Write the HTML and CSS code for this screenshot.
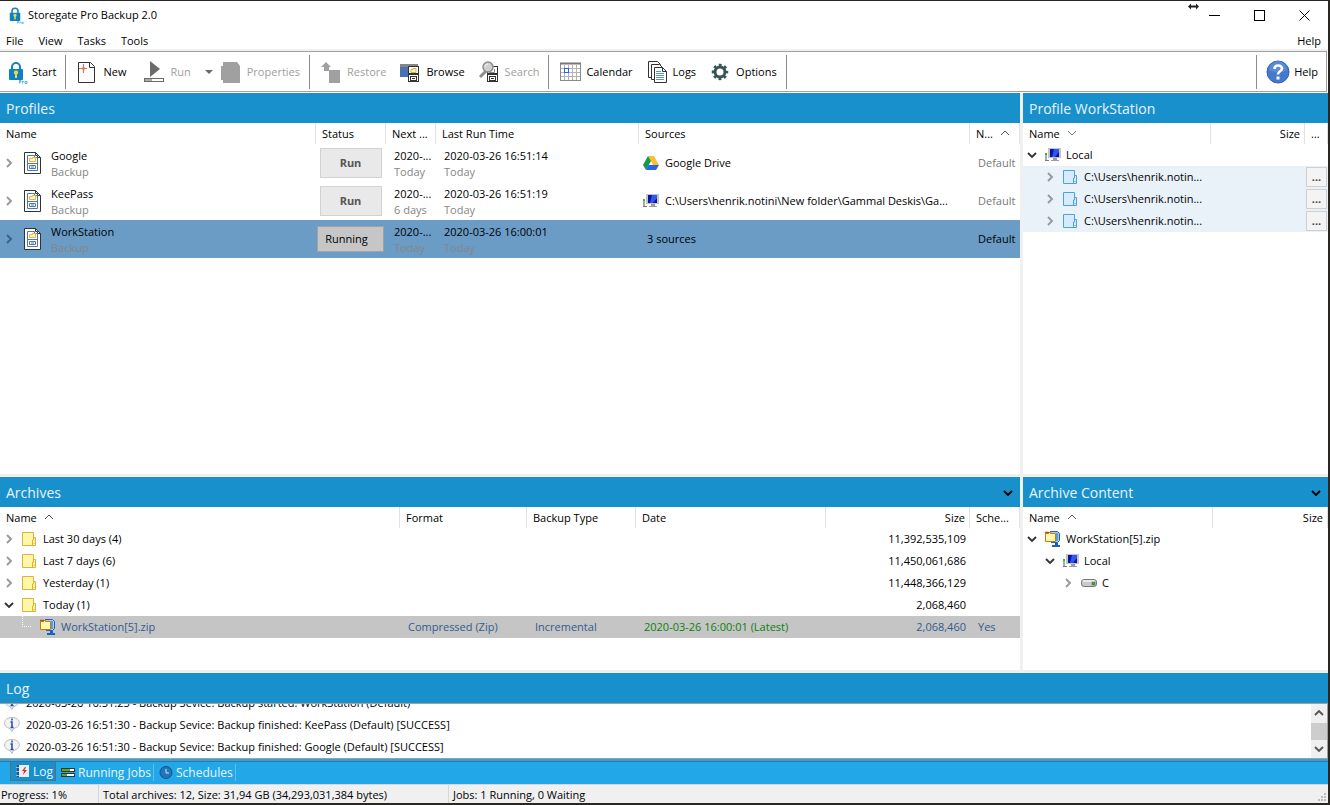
FILE: index.html
```html
<!DOCTYPE html>
<html lang="en">
<head>
  <meta charset="UTF-8" />
  <meta name="viewport" content="width=device-width, initial-scale=1.0" />
  <title>Storegate Pro Backup 2.0</title>
  <link rel="stylesheet" href="styles.css">
</head>
<body>
  <!-- shared icons -->
  <svg class="sprite" aria-hidden="true">
    <symbol id="i-lock" viewBox="0 0 24 24">
      <path d="M8 10V7a4 4 0 0 1 8 0v3" fill="none" stroke="#1583b8" stroke-width="2" />
      <rect x="5" y="9" width="14" height="11" rx="1" fill="#0b82c4" />
      <path d="M12 10.500a2 2 0 0 1 1.500 3.500l-.5.500V18h-2v-3.500l-.5-.5a2 2 0 0 1 1.500-3.500z" fill="#f2d44a" />
      <path d="M15.500 23.500v-3h1.500v1.500h-1.500m3 1.500v-2h1.500m1 0h2v2h-2z" fill="none" stroke="#2d9fe0" stroke-width=".8" />
    </symbol>
    <symbol id="i-new" viewBox="0 0 24 24">
      <path d="M3.500 2.500h12l4 4v16h-16z" fill="#fdfdfd" stroke="#333" />
      <path d="M14.500 2.500v5h5" fill="none" stroke="#333" />
      <path d="M8 4v3l-1 1H4v1h3l1 1v3h1v-3l1-1h2V8h-2L9 7V4z" fill="#f2684a" />
    </symbol>
    <symbol id="i-run" viewBox="0 0 24 24">
      <path d="M8 1l10 8-10 8z" fill="#6b6b6b" />
      <rect x="2.500" y="18.500" width="19" height="3" fill="#fff" stroke="#6b6b6b" />
      <path d="M3 19h7v2H3z" fill="#aaa" />
    </symbol>
    <symbol id="i-props" viewBox="0 0 24 24">
      <path d="M4 2h14l3 4v17H4v-3H2V6h2z" fill="#a0a0a0" />
    </symbol>
    <symbol id="i-restore" viewBox="0 0 24 24">
      <path d="M7 2l5 5h-2v3h11v13H10V11H5V7H2z" fill="#a0a0a0" />
    </symbol>
    <symbol id="i-cabinet" viewBox="0 0 24 24">
      <rect x="10.500" y="6.500" width="10" height="15" fill="#fff" stroke="#333" />
      <path d="M10 14h11" stroke="#333" stroke-width="2" />
      <rect x="12.500" y="16.500" width="6" height="4" fill="none" stroke="#333" />
      <path d="M14 18.500h3" stroke="#333" />
    </symbol>
    <symbol id="i-browse" viewBox="0 0 24 24">
      <rect x="2" y="4" width="18" height="13" fill="#4a72b0" />
      <path d="M2 4h18v3H2z" fill="#858585" />
      <use href="#i-cabinet" />
      <path d="M13 12.500v-3h2v-1h3v4z" fill="#fff3c4" stroke="#d9b23c" />
    </symbol>
    <symbol id="i-search" viewBox="0 0 24 24">
      <use href="#i-cabinet" />
      <path d="M12.500 8v4.500h5V9" fill="none" stroke="#888" />
      <path d="M9 11l-6 6" stroke="#8c8c8c" stroke-width="3" />
      <circle cx="11" cy="7" r="5" fill="#cfcfcf" stroke="#8c8c8c" stroke-width="1.500" />
      <path d="M8 7a3 3 0 0 1 3-3" fill="none" stroke="#f4f4f4" />
    </symbol>
    <symbol id="i-calendar" viewBox="0 0 24 24">
      <rect x="2.500" y="3.500" width="20" height="17" fill="#fff" stroke="#8a8a8a" />
      <path d="M2 3.500h21" stroke="#777" stroke-width="2" />
      <path d="M6.500 5v15m4-15v15m4-15v15m4-15v15M3 8.500h19M3 12.500h19M3 16.500h19" stroke="#b2b2b2" />
      <rect x="6.500" y="8.500" width="4" height="4" fill="#fff" stroke="#2f62d8" />
    </symbol>
    <symbol id="i-logs" viewBox="0 0 24 24">
      <path d="M3.500 1.500h9l3 3v13h-12z" fill="#fff" stroke="#333" />
      <path d="M6.500 4.500h8l3 3v12h-11z" fill="#fff" stroke="#333" />
      <path d="M9.500 7.500h8l4 4v11h-12z" fill="#fff" stroke="#333" />
      <path d="M17.500 7.500v4h4" fill="none" stroke="#333" />
      <path d="M11 11.500h5M11 13.500h8M11 15.500h8M11 17.500h8M11 19.500h8" stroke="#5594cf" />
    </symbol>
    <symbol id="i-gear" viewBox="0 0 24 24">
      <circle cx="12" cy="12" r="5" fill="none" stroke="#375359" stroke-width="3" />
      <circle cx="12" cy="12" r="7" fill="none" stroke="#375359" stroke-width="2.500" stroke-dasharray="2.750 2.750" stroke-dashoffset="1.400" />
    </symbol>
    <symbol id="i-help" viewBox="0 0 24 24">
      <circle cx="12" cy="12" r="11" fill="#4779cb" stroke="#2e5fb1" />
      <path d="M3 10a9 9 0 0 1 18 0c-5 3-12 3-18 0z" fill="#6c96dc" opacity=".6" />
      <path d="M8.500 9c0-5 7.500-4.500 7.500-.5 0 3-4 2.500-4 6" fill="none" stroke="#fff" stroke-width="2.500" />
      <rect x="10.500" y="16.500" width="3" height="3" fill="#fff" />
    </symbol>
    <symbol id="i-profile" viewBox="0 0 18 22">
      <path d="M.5.500h11l5 5v16H.5z" fill="#fff" stroke="#333" />
      <path d="M11.500.500v3h2v2h3" fill="none" stroke="#333" />
      <path d="M3.500 3.500h7v2h3v13h-10zM3 11.500h11" fill="none" stroke="#4a78b5" />
      <path d="M5.500 9.500v-3h3v-1h3v4z" fill="#fff6cf" stroke="#e6b92e" />
      <path d="M5.500 13.500h6v3h-6zM7 15h3" fill="none" stroke="#4a78b5" />
    </symbol>
    <symbol id="i-pc" viewBox="0 0 16 14">
      <rect x="3" y="0" width="13" height="10" fill="#c4c4c4" />
      <rect x="5" y="1" width="9" height="8" fill="#0a14a8" />
      <path d="M9 1h5v3L10 9H7z" fill="#2d58ee" />
      <path d="M8 10h4v2h2v1H6v-1h2z" fill="#9d9d9d" />
      <path d="M0 5h2v8H0z" fill="#aaa" />
      <path d="M0 5h2v2H0z" fill="#17d017" />
      <path d="M0 12h4v1H0z" fill="#777" />
    </symbol>
    <symbol id="i-drive" viewBox="0 0 16 14">
      <path d="M5 0h6l5 9h-6z" fill="#fbc02d" />
      <path d="M5 0l3 5-5 9-3-5z" fill="#129b50" />
      <path d="M5.500 9H16l-3 5H3z" fill="#2a62e8" />
    </symbol>
    <symbol id="i-folder" viewBox="0 0 14 14">
      <path d="M.5.500h11v5h2v8H.5z" fill="#fff7a8" stroke="#ddb23a" />
      <path d="M11.500 5v3h-1v5.500M12 11v1" fill="none" stroke="#ddb23a" />
    </symbol>
    <symbol id="i-bluefolder" viewBox="0 0 14 14">
      <path d="M.5.500h11v5h2v8H.5z" fill="#d9ebfa" stroke="#4ba3dc" />
      <path d="M11.500 5v3h-1v5.500M12 11v1" fill="none" stroke="#4ba3dc" />
    </symbol>
    <symbol id="i-zip" viewBox="0 0 16 16">
      <path d="M5 .5h7.500l2 2v7l-2 2H6" fill="#a8d0f5" stroke="#1c5fc4" />
      <path d="M12 2v8" stroke="#1c5fc4" />
      <path d="M.5 2.500h3v-1h2v1h5v8H.5z" fill="#fff7ae" stroke="#c07c16" />
      <path d="M0 1.500h4" stroke="#c8441c" stroke-width="1.500" />
      <path d="M10 12h3v2h2v2H7v-2h3z" fill="#1c5fc4" />
    </symbol>
    <symbol id="i-disk" viewBox="0 0 16 8">
      <rect x=".5" y=".5" width="15" height="7" rx="2.500" fill="#c9c9ce" stroke="#777" />
      <path d="M2 2h12" stroke="#f4f4f4" stroke-width="1.500" />
      <rect x="11" y="3" width="3" height="3" fill="#27b12c" stroke="#476b47" stroke-width=".5" />
    </symbol>
    <symbol id="i-info" viewBox="0 0 16 16">
      <path d="M8 .5c9 0 10 9 1.500 11l-1.500 3-2-3C-2 9.500-1 .5 8 .5z" fill="#f3f3f3" stroke="#b9b9b9" />
      <path d="M8 1.500v2M6.500 5H8v5M6.500 10.500h3" fill="none" stroke="#2446b0" stroke-width="1.500" />
    </symbol>
    <symbol id="i-right" viewBox="0 0 10 10">
      <path d="M3 1l4 4-4 4" fill="none" stroke="currentColor" stroke-width="1.900" />
    </symbol>
    <symbol id="i-down" viewBox="0 0 10 10">
      <path d="M1 3l4 4 4-4" fill="none" stroke="currentColor" stroke-width="1.900" />
    </symbol>
    <symbol id="i-up" viewBox="0 0 10 10">
      <path d="M1 7l4-4 4 4" fill="none" stroke="currentColor" stroke-width="1.900" />
    </symbol>
    <symbol id="i-sortup" viewBox="0 0 10 10">
      <path d="M1 7l4-4 4 4" fill="none" stroke="#555" />
    </symbol>
    <symbol id="i-sortdown" viewBox="0 0 10 10">
      <path d="M1 3l4 4 4-4" fill="none" stroke="#777" />
    </symbol>
  </svg>

  <header class="titlebar">
    <svg class="app-icon"><use href="#i-lock" /></svg>
    <h1>Storegate Pro Backup 2.0</h1>
    <div class="window-buttons">
      <button aria-label="Minimize"><svg viewBox="0 0 11 11"><path d="M0 5.500h11" stroke="#000" /></svg></button>
      <button aria-label="Maximize"><svg viewBox="0 0 11 11"><rect x=".5" y=".5" width="10" height="10" fill="none" stroke="#000" /></svg></button>
      <button aria-label="Close"><svg viewBox="0 0 11 11"><path d="M.5.500l10 10m0-10l-10 10" stroke="#000" /></svg></button>
      <svg class="resize-cursor" viewBox="0 0 11 7"><path d="M0 3.500L3 .5v2h5v-2l3 3-3 3v-2H3v2z" fill="#222" /></svg>
    </div>
  </header>

  <nav class="menubar">
    <a href="#">File</a>
    <a href="#">View</a>
    <a href="#">Tasks</a>
    <a href="#">Tools</a>
    <a href="#" class="push">Help</a>
  </nav>

  <div class="toolbar">
    <button class="start"><svg><use href="#i-lock" /></svg>Start</button>
    <span class="sep"></span>
    <button><svg><use href="#i-new" /></svg>New</button>
    <button disabled class="run"><svg><use href="#i-run" /></svg>Run</button>
    <button class="drop" aria-label="Run options"><span class="caret"></span></button>
    <button disabled><svg><use href="#i-props" /></svg>Properties</button>
    <span class="sep"></span>
    <button disabled><svg><use href="#i-restore" /></svg>Restore</button>
    <button><svg><use href="#i-browse" /></svg>Browse</button>
    <button disabled><svg><use href="#i-search" /></svg>Search</button>
    <span class="sep"></span>
    <button><svg><use href="#i-calendar" /></svg>Calendar</button>
    <button><svg><use href="#i-logs" /></svg>Logs</button>
    <button><svg><use href="#i-gear" /></svg>Options</button>
    <span class="sep"></span>
    <span class="sep push"></span>
    <button><svg><use href="#i-help" /></svg>Help</button>
  </div>

  <main class="panes">
    <section class="pane">
      <h2>Profiles</h2>
      <table class="profiles">
        <colgroup>
          <col class="w-name"><col class="w-status"><col class="w-next"><col class="w-last"><col><col class="w-short">
        </colgroup>
        <thead>
          <tr>
            <th>Name</th>
            <th>Status</th>
            <th>Next ...</th>
            <th>Last Run Time</th>
            <th>Sources</th>
            <th>N...<svg class="sort"><use href="#i-sortup" /></svg></th>
          </tr>
        </thead>
        <tbody>
          <tr>
            <td><div class="item"><svg class="arrow"><use href="#i-right" /></svg><svg class="profile-icon"><use href="#i-profile" /></svg><p>Google<small>Backup</small></p></div></td>
            <td class="action"><button>Run</button></td>
            <td><p>2020-...<small>Today</small></p></td>
            <td><p>2020-03-26 16:51:14<small>Today</small></p></td>
            <td><div class="source"><svg><use href="#i-drive" /></svg>Google Drive</div></td>
            <td class="muted">Default</td>
          </tr>
          <tr>
            <td><div class="item"><svg class="arrow"><use href="#i-right" /></svg><svg class="profile-icon"><use href="#i-profile" /></svg><p>KeePass<small>Backup</small></p></div></td>
            <td class="action"><button>Run</button></td>
            <td><p>2020-...<small>6 days</small></p></td>
            <td><p>2020-03-26 16:51:19<small>Today</small></p></td>
            <td><div class="source"><svg><use href="#i-pc" /></svg>C:\Users\henrik.notini\New folder\Gammal Deskis\Ga...</div></td>
            <td class="muted">Default</td>
          </tr>
          <tr class="selected">
            <td><div class="item"><svg class="arrow"><use href="#i-right" /></svg><svg class="profile-icon"><use href="#i-profile" /></svg><p>WorkStation<small>Backup</small></p></div></td>
            <td class="action"><button class="running">Running</button></td>
            <td><p>2020-...<small>Today</small></p></td>
            <td><p>2020-03-26 16:00:01<small>Today</small></p></td>
            <td>3 sources</td>
            <td>Default</td>
          </tr>
        </tbody>
      </table>
    </section>

    <section class="pane">
      <h2>Profile WorkStation</h2>
      <table class="tree">
        <colgroup><col><col class="w-size"><col class="w-more"></colgroup>
        <thead>
          <tr>
            <th>Name<svg class="sort"><use href="#i-sortdown" /></svg></th>
            <th class="num">Size</th>
            <th>...</th>
          </tr>
        </thead>
        <tbody>
          <tr>
            <td><div class="node"><svg class="arrow open"><use href="#i-down" /></svg><svg class="icon"><use href="#i-pc" /></svg>Local</div></td>
            <td></td>
            <td></td>
          </tr>
          <tr class="tint">
            <td><div class="node level-2"><svg class="arrow"><use href="#i-right" /></svg><svg class="icon folder"><use href="#i-bluefolder" /></svg>C:\Users\henrik.notin...</div></td>
            <td></td>
            <td class="more"><button>...</button></td>
          </tr>
          <tr class="tint">
            <td><div class="node level-2"><svg class="arrow"><use href="#i-right" /></svg><svg class="icon folder"><use href="#i-bluefolder" /></svg>C:\Users\henrik.notin...</div></td>
            <td></td>
            <td class="more"><button>...</button></td>
          </tr>
          <tr class="tint">
            <td><div class="node level-2"><svg class="arrow"><use href="#i-right" /></svg><svg class="icon folder"><use href="#i-bluefolder" /></svg>C:\Users\henrik.notin...</div></td>
            <td></td>
            <td class="more"><button>...</button></td>
          </tr>
        </tbody>
      </table>
    </section>

    <section class="pane">
      <h2>Archives<button aria-label="Collapse"><svg><use href="#i-down" /></svg></button></h2>
      <table class="tree">
        <colgroup>
          <col><col class="w-format"><col class="w-type"><col class="w-date"><col class="w-bytes"><col class="w-short">
        </colgroup>
        <thead>
          <tr>
            <th>Name<svg class="sort"><use href="#i-sortup" /></svg></th>
            <th>Format</th>
            <th>Backup Type</th>
            <th>Date</th>
            <th class="num">Size</th>
            <th>Sche...</th>
          </tr>
        </thead>
        <tbody>
          <tr>
            <td><div class="node"><svg class="arrow"><use href="#i-right" /></svg><svg class="icon folder"><use href="#i-folder" /></svg>Last 30 days (4)</div></td>
            <td></td><td></td><td></td>
            <td class="num">11,392,535,109</td>
            <td></td>
          </tr>
          <tr>
            <td><div class="node"><svg class="arrow"><use href="#i-right" /></svg><svg class="icon folder"><use href="#i-folder" /></svg>Last 7 days (6)</div></td>
            <td></td><td></td><td></td>
            <td class="num">11,450,061,686</td>
            <td></td>
          </tr>
          <tr>
            <td><div class="node"><svg class="arrow"><use href="#i-right" /></svg><svg class="icon folder"><use href="#i-folder" /></svg>Yesterday (1)</div></td>
            <td></td><td></td><td></td>
            <td class="num">11,448,366,129</td>
            <td></td>
          </tr>
          <tr>
            <td><div class="node"><svg class="arrow open"><use href="#i-down" /></svg><svg class="icon folder"><use href="#i-folder" /></svg>Today (1)</div></td>
            <td></td><td></td><td></td>
            <td class="num">2,068,460</td>
            <td></td>
          </tr>
          <tr class="current">
            <td><div class="node level-2"><svg class="branch" viewBox="0 0 10 22"><path d="M.5 0v10.500H10" fill="none" stroke="#fff" stroke-dasharray="1 1" /></svg><svg class="icon"><use href="#i-zip" /></svg>WorkStation[5].zip</div></td>
            <td>Compressed (Zip)</td>
            <td>Incremental</td>
            <td class="latest">2020-03-26 16:00:01 (Latest)</td>
            <td class="num">2,068,460</td>
            <td>Yes</td>
          </tr>
        </tbody>
      </table>
    </section>

    <section class="pane">
      <h2>Archive Content<button aria-label="Collapse"><svg><use href="#i-down" /></svg></button></h2>
      <table class="tree">
        <colgroup><col><col class="w-content"></colgroup>
        <thead>
          <tr>
            <th>Name<svg class="sort"><use href="#i-sortup" /></svg></th>
            <th class="num">Size</th>
          </tr>
        </thead>
        <tbody>
          <tr>
            <td><div class="node"><svg class="arrow open"><use href="#i-down" /></svg><svg class="icon"><use href="#i-zip" /></svg>WorkStation[5].zip</div></td>
            <td></td>
          </tr>
          <tr>
            <td><div class="node level-2"><svg class="arrow open"><use href="#i-down" /></svg><svg class="icon"><use href="#i-pc" /></svg>Local</div></td>
            <td></td>
          </tr>
          <tr>
            <td><div class="node level-3"><svg class="arrow"><use href="#i-right" /></svg><svg class="icon disk"><use href="#i-disk" /></svg>C</div></td>
            <td></td>
          </tr>
        </tbody>
      </table>
    </section>
  </main>

  <section class="log">
    <h2>Log</h2>
    <div class="log-box">
      <ul>
        <li><svg><use href="#i-info" /></svg>2020-03-26 16:51:25 - Backup Sevice: Backup started: WorkStation (Default)</li>
        <li><svg><use href="#i-info" /></svg>2020-03-26 16:51:30 - Backup Sevice: Backup finished: KeePass (Default) [SUCCESS]</li>
        <li><svg><use href="#i-info" /></svg>2020-03-26 16:51:30 - Backup Sevice: Backup finished: Google (Default) [SUCCESS]</li>
      </ul>
      <div class="scrollbar">
        <svg><use href="#i-up" /></svg>
        <span class="thumb"></span>
        <svg><use href="#i-down" /></svg>
      </div>
    </div>
  </section>

  <div class="tabs">
    <button class="active">
      <svg viewBox="0 0 14 14"><path d="M1 0h12v12H1z" fill="#e9eef5" /><path d="M1 0h2v12H1z" fill="#2c4f8f" /><path d="M0 2.500h3m-3 4h3m-3 4h3" stroke="#9cb8dd" /><path d="M9 2L6 6h2l-1 4 4-5H8.500L10 2z" fill="#d0342c" /></svg>
      Log
    </button>
    <button>
      <svg viewBox="0 0 14 14"><rect x=".5" y="2.500" width="13" height="3" fill="#fff" stroke="#333" /><path d="M1 3h8v2H1z" fill="#5aa813" /><rect x=".5" y="7.500" width="13" height="3" fill="#fff" stroke="#333" /><path d="M1 8h5v2H1z" fill="#5aa813" /></svg>
      Running Jobs
    </button>
    <button>
      <svg viewBox="0 0 14 14"><circle cx="7" cy="6.500" r="6" fill="#1f77b8" stroke="#1d4f80" /><path d="M7 3v4h3" fill="none" stroke="#cfe8f8" /></svg>
      Schedules
    </button>
  </div>

  <footer class="statusbar">
    <span class="progress">Progress: 1%</span>
    <span class="totals">Total archives: 12, Size: 31,94 GB (34,293,031,384 bytes)</span>
    <span>Jobs: 1 Running, 0 Waiting</span>
    <svg class="grip" viewBox="0 0 8 8"><path d="M6 0h2v2H6zM3 3h2v2H3zM6 3h2v2H6zM0 6h2v2H0zM3 6h2v2H3zM6 6h2v2H6z" fill="#bbb" /></svg>
  </footer>
</body>
</html>
```
FILE: styles.css
```css
* {
  margin: 0;
  padding: 0;
  box-sizing: border-box;
}

body {
  display: flex;
  flex-direction: column;
  height: 100vh;
  overflow: hidden;
  font-family: 'Open Sans', 'Noto Sans', sans-serif;
  font-size: 11px;
  line-height: 16px;
  color: #000;
  background: #fff;
  border: 1px solid #2a2622;
  border-width: 1px 2px 2px 0;
}

button {
  font: inherit;
  color: inherit;
  background: none;
  border: none;
}

a {
  color: inherit;
  text-decoration: none;
}

svg {
  display: block;
  flex: none;
}

.sprite {
  position: absolute;
  width: 0;
  height: 0;
}

.push {
  margin-left: auto;
}

/* title bar */
.titlebar {
  display: flex;
  align-items: center;
  height: 30px;
  padding: 0 1px 2px 6px;
}

.app-icon {
  width: 18px;
  height: 18px;
}

.titlebar h1 {
  margin-left: 4px;
  font-size: 11px;
  font-weight: normal;
}

.window-buttons {
  position: relative;
  display: flex;
  margin-left: auto;
}

.window-buttons button {
  display: grid;
  place-items: center;
  width: 45px;
  height: 28px;
}

.window-buttons button svg {
  width: 11px;
  height: 11px;
}

.resize-cursor {
  position: absolute;
  top: 2px;
  left: -4px;
  width: 11px;
  height: 7px;
}

/* menu */
.menubar {
  display: flex;
  gap: 15px;
  height: 20px;
  padding: 2px 7px 0 6px;
  border-bottom: 2px solid #f0f0f0;
}

/* toolbar */
.toolbar {
  display: flex;
  align-items: center;
  height: 41px;
  margin: 0 1px 1px 0;
  padding-right: 2px;
  border: 1px solid #a0a0a0;
  border-left: none;
}

.toolbar button {
  display: flex;
  align-items: center;
  gap: 4px;
  padding: 0 6px;
}

.toolbar .start {
  padding-left: 4px;
}

.toolbar .run {
  padding-left: 10px;
}

.toolbar button:disabled {
  color: #a0a0a0;
}

.toolbar svg {
  width: 24px;
  height: 24px;
}

.toolbar .drop {
  padding: 0 0 0 8px;
}

.caret {
  border: 4px solid transparent;
  border-top-color: #6b6b6b;
  border-bottom: none;
}

.sep {
  width: 1px;
  height: 34px;
  margin: 0 3px;
  background: #8c8c8c;
}

.sep.push {
  margin-left: auto;
}

/* panes */
.panes {
  display: grid;
  flex: 1;
  grid-template-columns: minmax(0, 1fr) 305px;
  grid-template-rows: minmax(0, 1fr) 193px;
  gap: 3px;
  min-height: 0;
  background: #f0f0f0;
  border-bottom: 3px solid #f0f0f0;
}

.pane {
  overflow: hidden;
  background: #fff;
}

h2 {
  display: flex;
  align-items: center;
  justify-content: space-between;
  height: 30px;
  padding: 2px 7px 0 6px;
  font-size: 14px;
  font-weight: normal;
  color: #e8f4fb;
  background: #1790cc;
}

h2 button {
  color: #000;
}

h2 svg {
  width: 10px;
  height: 10px;
}

table {
  width: 100%;
  table-layout: fixed;
  border-collapse: collapse;
}

.w-name { width: 316px; }
.w-status { width: 70px; }
.w-next { width: 50px; }
.w-last { width: 203px; }
.w-short { width: 50px; }
.w-size { width: 94px; }
.w-more { width: 23px; }
.w-format { width: 127px; }
.w-type { width: 109px; }
.w-date { width: 190px; }
.w-bytes { width: 144px; }
.w-content { width: 115px; }

th {
  height: 21px;
  padding: 0 5px 0 6px;
  font-weight: normal;
  text-align: left;
  white-space: nowrap;
  background: linear-gradient(#e2e2e2, #e2e2e2) right / 1px 100% no-repeat;
}

th:first-child {
  padding-left: 6px;
}

th .sort {
  display: inline-block;
  width: 10px;
  height: 10px;
  margin-left: 7px;
}

td {
  height: 22px;
  padding: 0 4px 0 8px;
  white-space: nowrap;
}

td:first-child {
  padding-left: 4px;
}

.num {
  text-align: right;
}

.arrow {
  width: 10px;
  height: 10px;
  color: #9a9a9a;
}

.arrow.open {
  color: #333;
}

/* profiles */
.profiles td {
  height: 38px;
}

.profiles p {
  padding-top: 2px;
}

.profiles small {
  display: block;
  font-size: 11px;
  color: #868686;
}

.item {
  display: flex;
  align-items: center;
}

.profile-icon {
  width: 18px;
  height: 22px;
  margin: 0 9px 0 10px;
}

.profiles .action {
  padding: 0 2px 0 1px;
  text-align: center;
}

.action button {
  width: 62px;
  height: 30px;
  font-weight: bold;
  color: #555;
  background: #e9e9e9;
  border: 1px solid #d2d2d2;
}

.action .running {
  width: 67px;
  height: 26px;
  padding-right: 8px;
  font-weight: normal;
  color: #000;
  background: #c6c6c6;
  border-color: #a2a2a2;
}

.source {
  display: flex;
  align-items: center;
  gap: 6px;
  margin-left: -4px;
}

.source svg {
  width: 16px;
  height: 14px;
}

.muted {
  color: #787878;
}

.selected {
  background: #6a9cc6;
}

.selected .arrow {
  color: #3f6080;
}

/* trees */
.node {
  display: flex;
  align-items: center;
}

.node .icon {
  width: 16px;
  height: 16px;
  margin: 0 5px 0 8px;
}

.node .folder {
  width: 14px;
  height: 14px;
  margin-right: 7px;
}

.node .disk {
  height: 8px;
}

.level-2 {
  padding-left: 18px;
}

.level-3 {
  padding-left: 36px;
}

.tint {
  background: #e9f1f9;
}

td.more {
  padding: 0 1px;
}

.more button {
  display: block;
  width: 100%;
  height: 20px;
  line-height: 16px;
  font-weight: bold;
  color: #444;
  background: #f4f4f4;
  border: 1px solid #d0d0d0;
}

.current {
  color: #2f5c8f;
  background: #c5c5c5;
}

.branch {
  width: 10px;
  height: 22px;
}

.latest {
  color: #0a820a;
}

/* log */
.log-box {
  display: flex;
  height: 56px;
  border: 1px solid #a0a0a0;
  border-left: none;
}

.log ul {
  display: flex;
  flex: 1;
  flex-direction: column;
  justify-content: flex-end;
  overflow: hidden;
  list-style: none;
}

.log li {
  display: flex;
  flex: none;
  align-items: center;
  gap: 6px;
  height: 22px;
  padding-left: 4px;
}

.log li svg {
  width: 16px;
  height: 16px;
}

.scrollbar {
  display: flex;
  flex-direction: column;
  align-items: center;
  justify-content: space-between;
  width: 16px;
  padding: 4px 0;
  color: #555;
  background: #f0f0f0;
}

.scrollbar svg {
  width: 10px;
  height: 10px;
}

.thumb {
  width: 16px;
  height: 17px;
  background: #cdcdcd;
}

/* bottom tabs */
.tabs {
  display: flex;
  height: 25px;
  padding-left: 10px;
  background: linear-gradient(#4d6f80, #4d6f80) 0 2px / 100% 1px no-repeat #22a7e8;
}

.tabs button {
  display: flex;
  align-items: center;
  gap: 3px;
  height: 17px;
  margin-top: 5px;
  padding: 0 2px 0 5px;
  font-size: 12px;
  color: #eaf6fd;
  border-right: 1px solid #5fbde8;
}

.tabs svg {
  width: 14px;
  height: 14px;
}

.tabs .active {
  height: 19px;
  margin-top: 3px;
  padding-top: 2px;
  background: #1790cc;
  border: 1px solid #5a6f7c;
  border-top: none;
}

/* status bar */
.statusbar {
  display: flex;
  height: 19px;
  line-height: 20px;
  background: #f0f0f0;
  border-top: 1px solid #d7d7d7;
}

.statusbar span {
  padding-left: 4px;
}

.statusbar .progress {
  width: 99px;
  padding-left: 1px;
  border-right: 1px solid #d7d7d7;
}

.statusbar .totals {
  width: 350px;
  border-right: 1px solid #d7d7d7;
}

.grip {
  align-self: flex-end;
  width: 8px;
  height: 8px;
  margin: 0 2px 2px auto;
}
```
